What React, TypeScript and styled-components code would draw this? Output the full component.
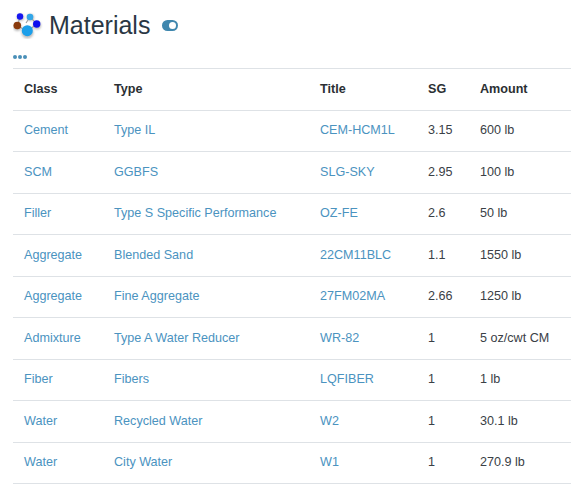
import { FC } from "react"
import styled, { createGlobalStyle } from "styled-components"

const GlobalStyle = createGlobalStyle`
    html, body {
        margin: 0;
        padding: 0;
        background: #fff;
        font-family: "Liberation Sans", Arial, sans-serif;
        overflow: hidden;
    }
`

const Page = styled.div`
    width: 571px;
    height: 488px;
    padding-left: 13px;
    box-sizing: border-box;
    overflow: hidden;
`

const Header = styled.div`
    display: flex;
    align-items: center;
    height: 50px;
`

const Title = styled.h1`
    margin: 0 0 0 5px;
    font-size: 25px;
    font-weight: 400;
    line-height: 1;
    color: #2a3744;
`

const Toggle = styled.span`
    display: block;
    position: relative;
    width: 16px;
    height: 11px;
    margin: 1px 0 0 12px;
    border-radius: 6px;
    background: #3f87ae;

    &::after {
        content: "";
        position: absolute;
        top: 2px;
        right: 2px;
        width: 7px;
        height: 7px;
        border-radius: 50%;
        background: #fff;
    }
`

const Dots = styled.div`
    display: flex;
    gap: 1px;
    height: 18px;
    padding-top: 5px;
    box-sizing: border-box;
`

const Dot = styled.span`
    width: 4px;
    height: 4px;
    border-radius: 50%;
    background: #4a8fb8;
`

const Table = styled.table`
    width: 558px;
    table-layout: fixed;
    border-collapse: collapse;
    font-size: 12.6px;
    line-height: 19.5px;
    color: #3a4046;
`

const HeadCell = styled.th<{ $width: number }>`
    width: ${(p) => p.$width}px;
    padding: 10.5px 0 10.5px 11px;
    box-sizing: border-box;
    border-top: 1px solid #dee2e6;
    border-bottom: 1px solid #dee2e6;
    text-align: left;
    font-weight: 700;
    color: #2b2f33;
`

const Cell = styled.td`
    padding: 10.5px 0 10.5px 11px;
    border-bottom: 1px solid #dee2e6;
`

const Link = styled.a`
    color: #4b93bf;
    text-decoration: none;
`

const Logo: FC = () => (
    <svg width="31" height="28" viewBox="0 0 31 28">
        <defs>
            <filter id="soft" x="-30%" y="-30%" width="160%" height="160%">
                <feGaussianBlur stdDeviation="0.5" />
            </filter>
            <filter id="halo" x="-30%" y="-30%" width="160%" height="160%">
                <feGaussianBlur stdDeviation="1" />
            </filter>
        </defs>
        <g filter="url(#halo)" fill="#bdbdbd">
            <circle cx="7.5" cy="6.5" r="3.6" />
            <circle cx="17.5" cy="6.5" r="3.6" />
            <circle cx="24" cy="14.5" r="4" />
            <circle cx="4.5" cy="16" r="4" />
            <circle cx="14.5" cy="21.5" r="6" />
        </g>
        <path d="M7 5.5 4.5 15 14.5 20 24 13 17 6 13 12" stroke="#9c9c9c" strokeWidth="1.1" fill="none" />
        <g filter="url(#soft)">
            <circle cx="7" cy="5.5" r="3.2" fill="#1414f0" />
            <circle cx="17" cy="6" r="3.3" fill="#30a6e8" />
            <circle cx="23.7" cy="13" r="3.7" fill="#1010ee" />
            <circle cx="4.3" cy="14.5" r="3.8" fill="#8a3a08" />
            <circle cx="14.3" cy="19.7" r="5.5" fill="#1a9fea" />
        </g>
    </svg>
)

const columns = [
    { label: "Class", width: 90 },
    { label: "Type", width: 206 },
    { label: "Title", width: 108 },
    { label: "SG", width: 52 },
    { label: "Amount", width: 102 },
]

const materials = [
    { cls: "Cement", type: "Type IL", title: "CEM-HCM1L", sg: "3.15", amount: "600 lb" },
    { cls: "SCM", type: "GGBFS", title: "SLG-SKY", sg: "2.95", amount: "100 lb" },
    { cls: "Filler", type: "Type S Specific Performance", title: "OZ-FE", sg: "2.6", amount: "50 lb" },
    { cls: "Aggregate", type: "Blended Sand", title: "22CM11BLC", sg: "1.1", amount: "1550 lb" },
    { cls: "Aggregate", type: "Fine Aggregate", title: "27FM02MA", sg: "2.66", amount: "1250 lb" },
    { cls: "Admixture", type: "Type A Water Reducer", title: "WR-82", sg: "1", amount: "5 oz/cwt CM" },
    { cls: "Fiber", type: "Fibers", title: "LQFIBER", sg: "1", amount: "1 lb" },
    { cls: "Water", type: "Recycled Water", title: "W2", sg: "1", amount: "30.1 lb" },
    { cls: "Water", type: "City Water", title: "W1", sg: "1", amount: "270.9 lb" },
]

export default function App() {
    return (
        <Page>
            <GlobalStyle />
            <Header>
                <Logo />
                <Title>Materials</Title>
                <Toggle />
            </Header>
            <Dots>
                <Dot />
                <Dot />
                <Dot />
            </Dots>
            <Table>
                <thead>
                    <tr>
                        {columns.map((c) => (
                            <HeadCell key={c.label} $width={c.width}>{c.label}</HeadCell>
                        ))}
                    </tr>
                </thead>
                <tbody>
                    {materials.map((m) => (
                        <tr key={m.title}>
                            <Cell><Link href="#">{m.cls}</Link></Cell>
                            <Cell><Link href="#">{m.type}</Link></Cell>
                            <Cell><Link href="#">{m.title}</Link></Cell>
                            <Cell>{m.sg}</Cell>
                            <Cell>{m.amount}</Cell>
                        </tr>
                    ))}
                </tbody>
            </Table>
        </Page>
    )
}
